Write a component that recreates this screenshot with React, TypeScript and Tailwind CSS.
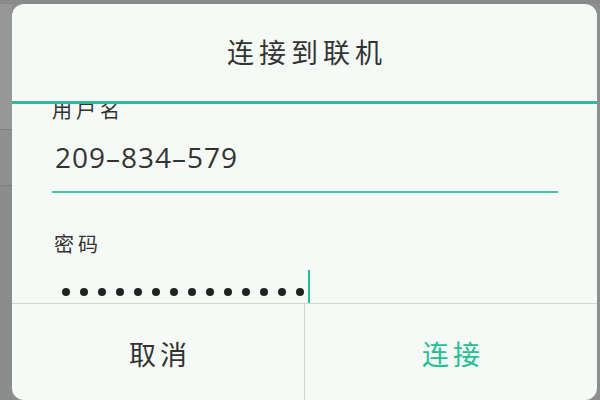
export default function App() {
  const dots = Array.from({ length: 14 });

  return (
    <div className="w-[600px] h-[400px] flex flex-col bg-[#8e8e8e] overflow-hidden font-['Noto_Sans_CJK_SC',sans-serif]">
      <div className="h-[4px] bg-[#8a8a8a]" />
      <div className="flex flex-1 min-h-0">
        {/* background screen peeking out on the left */}
        <div className="w-[12px] flex flex-col">
          <div className="h-[126px] bg-[#979797] border-b border-[#7e7e7e]" />
          <div className="h-[56px] bg-[#8f8f8f] border-b border-[#7e7e7e]" />
          <div className="flex-1 bg-[#8c8c8c]" />
        </div>

        {/* dialog */}
        <div className="w-[585px] h-[396px] flex flex-col bg-[#f5faf6] rounded-[12px] overflow-hidden">
          <div className="h-[97px] flex items-center justify-center pl-[5px]">
            <span className="text-[27px] tracking-[5px] text-[#333333]">连接到联机</span>
          </div>
          <div className="h-[3px] bg-[#33b898]" />

          <div className="h-[199px] overflow-hidden pl-[40px] pr-[39px]">
            <div className="mt-[-7px] flex flex-col">
              <div className="text-[20px] leading-[26px] tracking-[4px] text-[#333333]">用户名</div>
              <div className="mt-[16px] pl-[3px] font-['Open_Sans',sans-serif] text-[28px] leading-[36px] tracking-[1px] text-[#333333]">
                209–834–579
              </div>
              <div className="mt-[16px] h-[2px] bg-[#45c6a6]" />
              <div className="mt-[38px] pl-[2px] text-[20px] leading-[26px] tracking-[4px] text-[#333333]">密码</div>
              <div className="mt-[13px] h-[33px] flex items-end pl-[10px]">
                <div className="flex gap-[10px] mb-[7px]">
                  {dots.map((_, i) => (
                    <span key={i} className="w-[8px] h-[8px] rounded-full bg-[#222222]" />
                  ))}
                </div>
                <div className="ml-[4px] w-[2px] h-full bg-[#1fc08f]" />
              </div>
            </div>
          </div>

          <div className="flex-1 flex border-t border-[#d4d4d4]">
            <button className="flex-1 flex items-center justify-center pt-[4px] pl-[4px] text-[27px] tracking-[4px] text-[#333333] border-r border-[#d4d4d4]">
              取消
            </button>
            <button className="flex-1 flex items-center justify-center pt-[4px] pl-[4px] text-[27px] tracking-[4px] text-[#22bf90]">
              连接
            </button>
          </div>
        </div>

        <div className="w-[3px] bg-[#8e8e8e]" />
      </div>
    </div>
  );
}
